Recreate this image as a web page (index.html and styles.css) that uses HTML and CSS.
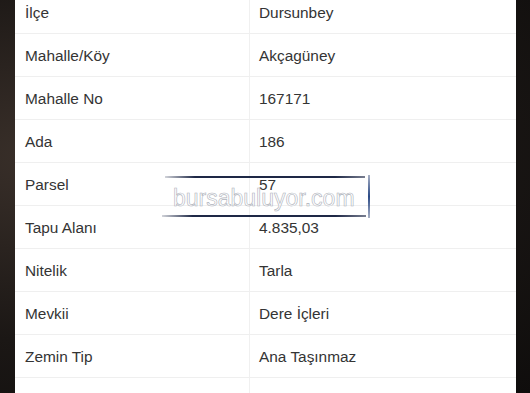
FILE: index.html
```html
<!DOCTYPE html>
<html lang="tr">
<head>
<meta charset="utf-8">
<link rel="stylesheet" href="styles.css">
</head>
<body>
<div class="frame">
  <div class="panel">
    <div class="row"><div class="k">İlçe</div><div class="v">Dursunbey</div></div>
    <div class="row"><div class="k">Mahalle/Köy</div><div class="v">Akçagüney</div></div>
    <div class="row"><div class="k">Mahalle No</div><div class="v">167171</div></div>
    <div class="row"><div class="k">Ada</div><div class="v">186</div></div>
    <div class="row"><div class="k">Parsel</div><div class="v">57</div></div>
    <div class="row"><div class="k">Tapu Alanı</div><div class="v">4.835,03</div></div>
    <div class="row"><div class="k">Nitelik</div><div class="v">Tarla</div></div>
    <div class="row"><div class="k">Mevkii</div><div class="v">Dere İçleri</div></div>
    <div class="row"><div class="k">Zemin Tip</div><div class="v">Ana Taşınmaz</div></div>
    <div class="row"><div class="k">Pafta</div><div class="v">Bilinmiyor</div></div>
  </div>
  <div class="mark">
    <span class="line top"></span>
    <span class="mark-text">bursabuluyor.com</span>
    <span class="line bottom"></span>
    <span class="bar"></span>
  </div>
</div>
</body>
</html>
```
FILE: styles.css
```css
html, body {
  margin: 0;
  padding: 0;
  width: 530px;
  height: 393px;
  overflow: hidden;
}
body {
  background: radial-gradient(ellipse at 10% 40%, #3a302a 0%, #1b1715 55%, #0f0d0c 100%);
  font-family: "Liberation Sans", Arial, sans-serif;
}
.frame {
  position: relative;
  height: 393px;
  overflow: hidden;
  padding: 0 14px 0 15px;
}
.panel {
  background: #fff;
  margin-top: -9px;
  height: 402px;
  overflow: hidden;
}
.row {
  display: grid;
  grid-template-columns: 235px 1fr;
  height: 42px;
  border-bottom: 1px solid #efefef;
}
.k, .v {
  display: flex;
  align-items: center;
  font-size: 15.4px;
  color: #343434;
  padding-top: 1px;
}
.k {
  padding-left: 10px;
  border-right: 1px solid #f0f0f0;
}
.v {
  padding-left: 9px;
}
.mark {
  position: absolute;
  left: 162px;
  top: 175px;
  width: 208px;
  height: 43px;
}
.line {
  position: absolute;
  height: 2px;
  background: linear-gradient(90deg, rgba(30,40,70,0.2), #1e2846 15%, #1e2846 85%, rgba(30,40,70,0.6));
}
.line.top { left: 3px; top: 1px; width: 200px; }
.line.bottom { left: 0; top: 40px; width: 204px; }
.bar {
  position: absolute;
  right: 0;
  top: 0;
  width: 2px;
  height: 43px;
  background: linear-gradient(180deg, rgba(40,60,110,0.4), #2b4a86 50%, rgba(40,60,110,0.4));
}
.mark-text {
  position: absolute;
  left: 11px;
  top: 11px;
  font-family: "Liberation Sans", Arial, sans-serif;
  font-size: 23px;
  line-height: 24px;
  color: #fff;
  -webkit-text-stroke: 0.6px #aeb2bb;
  white-space: nowrap;
}
```
